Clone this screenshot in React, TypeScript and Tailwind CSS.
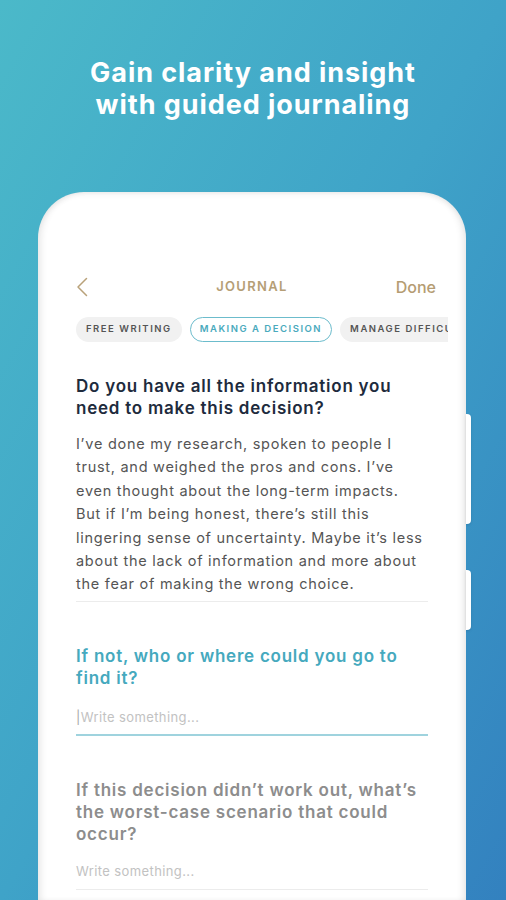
const font = { fontFamily: 'Inter, "Open Sans", sans-serif' };

function Chip({ label, active }: { label: string; active?: boolean }) {
  return (
    <div
      className={
        active
          ? "shrink-0 h-[25px] px-[9px] rounded-full border border-[#6cbccc] text-[#4aaabd] flex items-center text-[9.5px] font-semibold tracking-[0.16em] whitespace-nowrap"
          : "shrink-0 h-[25px] px-[10px] rounded-full bg-[#f1f1f1] text-[#555] flex items-center text-[9.5px] font-semibold tracking-[0.16em] whitespace-nowrap"
      }
    >
      {label}
    </div>
  );
}

function Question({ lines, color }: { lines: string[]; color: string }) {
  return (
    <h2 className={"text-[17px] font-semibold leading-[22px] tracking-[0.045em] whitespace-nowrap " + color}>
      {lines.map((l, i) => (
        <div key={i}>{l}</div>
      ))}
    </h2>
  );
}

const body = [
  "I’ve done my research, spoken to people I",
  "trust, and weighed the pros and cons. I’ve",
  "even thought about the long-term impacts.",
  "But if I’m being honest, there’s still this",
  "lingering sense of uncertainty. Maybe it’s less",
  "about the lack of information and more about",
  "the fear of making the wrong choice.",
];

export default function App() {
  return (
    <div
      className="relative w-[506px] h-[900px] overflow-hidden bg-gradient-to-br from-[#4bb9c9] via-[#3fa3c8] to-[#3381bf] flex flex-col items-center"
      style={font}
    >
      <h1 className="mt-[57px] text-white text-[27px] font-bold leading-[32px] text-center tracking-[0.035em]">
        Gain clarity and insight
        <br />
        with guided journaling
      </h1>

      <div className="relative mt-[71px] w-[428px] flex-1 self-start ml-[38px]">
        {/* side buttons */}
        <div className="absolute right-[-5px] top-[222px] w-[5px] h-[110px] rounded-r bg-white shadow-sm" />
        <div className="absolute right-[-5px] top-[378px] w-[5px] h-[60px] rounded-r bg-white shadow-sm" />

        <div className="h-full bg-white rounded-t-[46px] shadow-[inset_6px_0_7px_-3px_rgba(0,0,0,0.09),inset_-6px_0_7px_-3px_rgba(0,0,0,0.09),inset_0_5px_6px_-3px_rgba(0,0,0,0.06)] pl-[38px] pr-[38px] pt-[82px]">
          {/* header */}
          <div className="flex items-center justify-between h-[26px]">
            <svg width="12" height="20" viewBox="0 0 12 20" fill="none">
              <path d="M10.5 1.5 L2 10 L10.5 18.5" stroke="#b9a27a" strokeWidth="1.5" strokeLinecap="round" strokeLinejoin="round" />
            </svg>
            <span className="text-[13px] font-semibold tracking-[0.1em] text-[#b59e76] ml-[20px]">JOURNAL</span>
            <span className="text-[16px] font-medium text-[#b59c72] -mr-[8px]">Done</span>
          </div>

          {/* chips */}
          <div className="mt-[17px] w-[372px] overflow-hidden flex gap-[8px]">
            <Chip label="FREE WRITING" />
            <Chip label="MAKING A DECISION" active />
            <Chip label="MANAGE DIFFICULT EMOTIONS" />
          </div>

          {/* question 1 */}
          <div className="mt-[33px]">
            <Question color="text-[#1e2b3d]" lines={["Do you have all the information you", "need to make this decision?"]} />
          </div>
          <p className="mt-[13px] text-[14.5px] leading-[23.4px] tracking-[0.05em] text-[#555555] whitespace-nowrap">
            {body.map((l, i) => (
              <span key={i} className="block">
                {l}
              </span>
            ))}
          </p>
          <div className="mt-[5px] h-px bg-[#ececec]" />

          {/* question 2 */}
          <div className="mt-[43px]">
            <Question color="text-[#45a9be]" lines={["If not, who or where could you go to", "find it?"]} />
          </div>
          <div className="mt-[19px] text-[13px] text-[#c2c2c2] leading-[18px] tracking-[0.03em]">
            <span className="text-[#a8a8a8]">|</span>Write something...
          </div>
          <div className="mt-[8px] h-[2px] bg-[#9fd3de]" />

          {/* question 3 */}
          <div className="mt-[43px]">
            <Question
              color="text-[#8d8d8d]"
              lines={["If this decision didn’t work out, what’s", "the worst-case scenario that could", "occur?"]}
            />
          </div>
          <div className="mt-[17px] text-[13px] text-[#c2c2c2] leading-[18px] tracking-[0.03em]">Write something...</div>
          <div className="mt-[9px] h-px bg-[#ececec]" />
        </div>
      </div>
    </div>
  );
}
